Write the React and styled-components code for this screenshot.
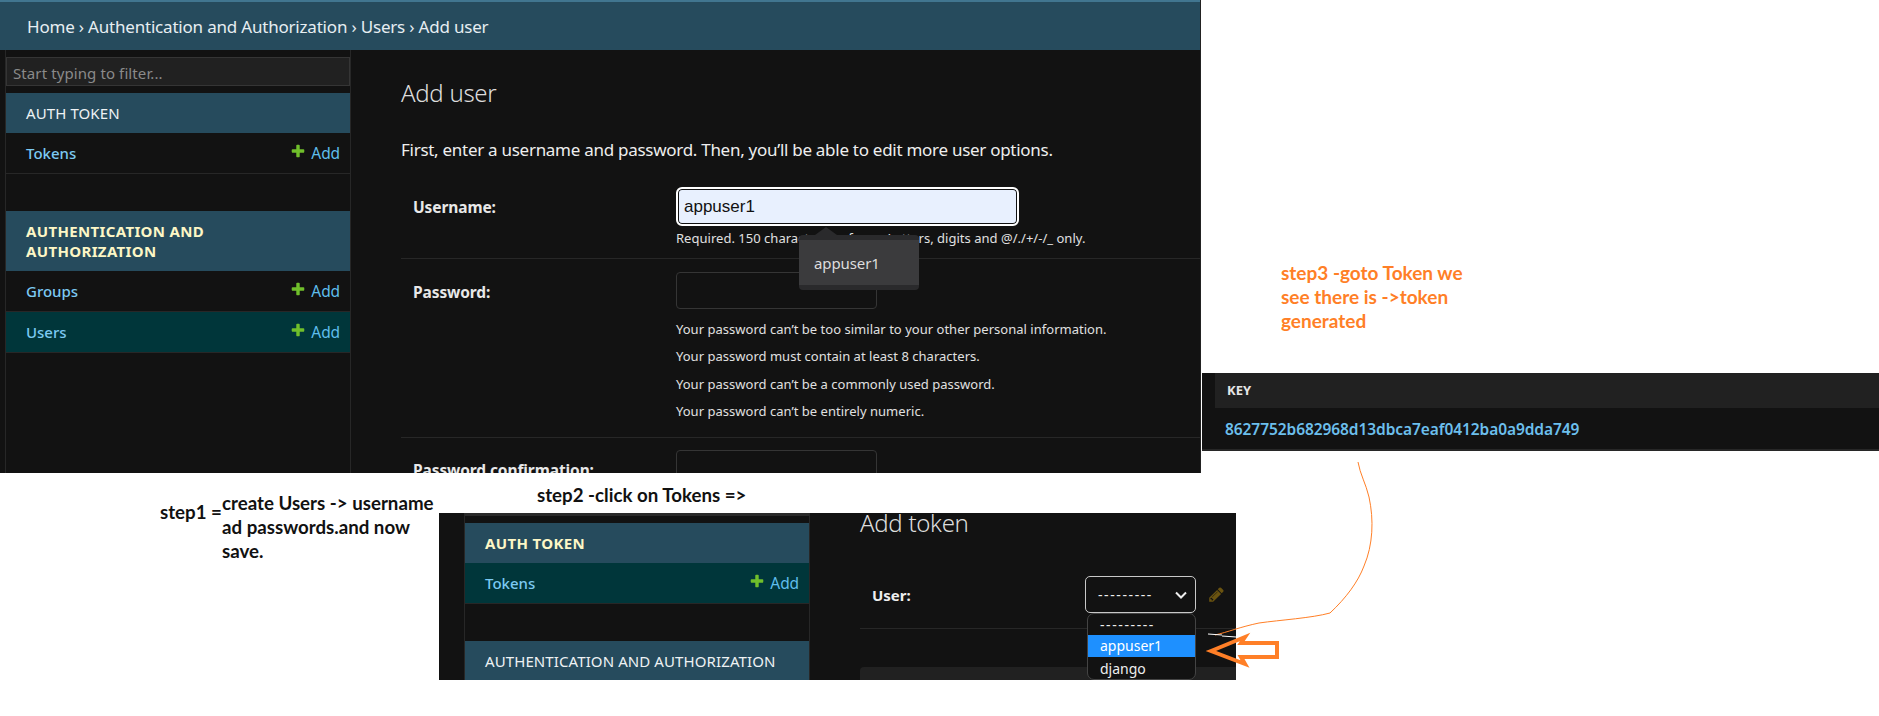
import React from "react";
import styled, { createGlobalStyle } from "styled-components";

const Global = createGlobalStyle`
  html, body { margin: 0; padding: 0; background: #fff; }
  #root { width: 1879px; height: 716px; }
`;

const uiFont = `"Noto Sans", "Open Sans", sans-serif`;
const noteFont = `Lato, "Open Sans", sans-serif`;

const Canvas = styled.div`
  position: relative;
  width: 1879px;
  height: 716px;
  overflow: hidden;
  background: #fff;
  font-family: ${uiFont};
`;

/* ---------- pasted screenshot 1 ---------- */
const UserShot = styled.section`
  position: absolute;
  left: 0;
  top: 0;
  width: 1201px;
  height: 473px;
  box-sizing: border-box;
  border-right: 1px solid #222;
  background: #121212;
  color: #eee;
  overflow: hidden;
  display: flex;
  flex-direction: column;
`;
const Breadcrumbs = styled.header`
  flex: none;
  height: 50px;
  box-sizing: border-box;
  border-top: 2px solid #417690;
  background: #264b5d;
  color: #e6eef2;
  padding-left: 27px;
  font-size: 17px;
  letter-spacing: -0.2px;
  line-height: 50px;
`;
const ShotBody = styled.div`
  flex: 1;
  display: flex;
  min-height: 0;
`;
const Sidebar = styled.nav`
  flex: none;
  width: 346px;
  margin-left: 5px;
  box-sizing: border-box;
  border-left: 1px solid #272727;
  border-right: 1px solid #272727;
  padding-top: 7px;
`;
const Filter = styled.input`
  display: block;
  width: 100%;
  height: 29px;
  box-sizing: border-box;
  margin: 0 0 7px;
  padding: 2px 6px 0;
  border: 1px solid #353535;
  background: #212121;
  color: #eee;
  font: 15px/25px ${uiFont};
  letter-spacing: 0.1px;
  outline: none;
  &::placeholder { color: #8a8a8a; opacity: 1; }
`;
const Caption = styled.div`
  background: #264b5d;
  color: ${(p) => (p.$current ? "#fdf7c6" : "#eef2f4")};
  font-size: 15px;
  font-weight: ${(p) => (p.$current ? 700 : 400)};
  line-height: 20px;
  padding: 10px 20px;
  letter-spacing: ${(p) => (p.$current ? "0.35px" : "0.1px")};
  white-space: nowrap;
`;
const ModelRow = styled.div`
  display: flex;
  align-items: center;
  justify-content: space-between;
  height: 41px;
  box-sizing: border-box;
  padding: 0 10px 0 20px;
  border-bottom: 1px solid #272727;
  background: ${(p) => (p.$selected ? "#00363a" : "transparent")};
`;
const ModelName = styled.span`
  color: #7cc9f2;
  font-size: 15px;
  font-weight: 500;
  letter-spacing: 0;
`;
const AddLink = styled.span`
  display: flex;
  align-items: center;
  gap: 5px;
  color: #5fbdec;
  font-size: 15.5px;
  letter-spacing: -0.1px;
`;
const PlusIcon = styled.svg`
  width: 16px;
  height: 16px;
  margin-top: -4px;
  fill: #70bf2b;
`;
const Plus = () => (
  <PlusIcon viewBox="0 0 1792 1792">
    <path d="M1600 796v192q0 40-28 68t-68 28h-416v416q0 40-28 68t-68 28h-192q-40 0-68-28t-28-68v-416h-416q-40 0-68-28t-28-68v-192q0-40 28-68t68-28h416v-416q0-40 28-68t68-28h192q40 0 68 28t28 68v416h416q40 0 68 28t28 68z" />
  </PlusIcon>
);
const SidebarGap = styled.div`
  height: 37px;
`;
const Main = styled.main`
  flex: 1;
  min-width: 0;
  padding: 26px 0 0 50px;
`;
const Title = styled.h1`
  margin: 0;
  font-size: 24px;
  font-weight: 300;
  line-height: 34px;
  color: #ddd;
  letter-spacing: -0.3px;
`;
const Intro = styled.p`
  margin: 28px 0 14px;
  font-size: 17px;
  line-height: 24px;
  color: #eee;
  letter-spacing: -0.28px;
`;
const FormRow = styled.div`
  display: grid;
  grid-template-columns: 275px 1fr;
  padding: ${(p) => p.$pad};
  border-bottom: 1px solid #272727;
`;
const FieldLabel = styled.label`
  padding-left: 12px;
  font-size: 15.5px;
  font-weight: 700;
  line-height: 40px;
  color: #e8e8e8;
  letter-spacing: -0.1px;
`;
const FocusInput = styled.input`
  display: block;
  width: 343px;
  height: 39px;
  box-sizing: border-box;
  border: 2px solid #fff;
  box-shadow: inset 0 0 0 1px #111;
  outline: none;
  border-radius: 6px;
  background: #e8f0fe;
  color: #111;
  padding: 0 6px;
  font: 17px "Liberation Sans", Arial, sans-serif;
`;
const EmptyInput = styled.input`
  display: block;
  width: 201px;
  height: 37px;
  box-sizing: border-box;
  border: 1px solid #353535;
  border-radius: 4px;
  background: #121212;
`;
const Help = styled.div`
  margin-top: ${(p) => p.$top || "0"};
  font-size: 13px;
  line-height: 18px;
  color: #e0e0e0;
  letter-spacing: 0.02px;
`;
const HelpList = styled.div`
  margin-top: 11px;
  display: flex;
  flex-direction: column;
  gap: 9.4px;
`;
const Autocomplete = styled.div`
  position: absolute;
  left: 799px;
  top: 235px;
  width: 120px;
  height: 55px;
  box-sizing: border-box;
  padding: 5px 0;
  border-radius: 4px;
  background: #2a2a2c;
  &::before {
    content: "";
    position: absolute;
    left: 16px;
    top: -8px;
    border-left: 11px solid transparent;
    border-right: 11px solid transparent;
    border-bottom: 8px solid #2a2a2c;
  }
`;
const AutocompleteItem = styled.div`
  height: 45px;
  padding-left: 15px;
  background: #3b3b3d;
  color: #ddd;
  font-size: 15px;
  line-height: 46px;
  letter-spacing: -0.1px;
`;

/* ---------- pasted screenshot 2: token key ---------- */
const KeyShot = styled.section`
  position: absolute;
  left: 1202px;
  top: 373px;
  width: 677px;
  height: 78px;
  box-sizing: border-box;
  padding-left: 13px;
  background: #121212;
  border-bottom: 2px solid #272727;
`;
const KeyHead = styled.div`
  height: 35px;
  background: #212121;
  color: #e6e6e6;
  font-size: 13px;
  font-weight: 700;
  line-height: 35px;
  padding-left: 12px;
`;
const KeyValue = styled.div`
  height: 41px;
  padding-left: 10px;
  color: #6cbfec;
  font-size: 15.5px;
  font-weight: 600;
  line-height: 43px;
  letter-spacing: -0.08px;
`;

/* ---------- pasted screenshot 3: add token ---------- */
const TokenShot = styled.section`
  position: absolute;
  left: 439px;
  top: 513px;
  width: 797px;
  height: 167px;
  display: flex;
  padding-left: 25px;
  box-sizing: border-box;
  background: #121212;
  color: #eee;
  overflow: hidden;
`;
const TokenSidebar = styled.nav`
  flex: none;
  width: 346px;
  box-sizing: border-box;
  border-left: 1px solid #272727;
  border-right: 1px solid #272727;
  border-top: 3px solid #2a2a2a;
  padding-top: 7px;
`;
const TokenMain = styled.div`
  flex: 1;
  min-width: 0;
  padding-left: 50px;
  margin-top: -7px;
`;
const TokenRow = styled.div`
  display: grid;
  grid-template-columns: 225px auto 1fr;
  align-items: center;
  margin-top: 36px;
  padding-bottom: 15px;
  border-bottom: 1px solid #272727;
`;
const UserLabel = styled.label`
  padding-left: 12px;
  font-size: 15px;
  font-weight: 700;
  color: #eee;
`;
const SelectBox = styled.div`
  width: 111px;
  height: 37px;
  box-sizing: border-box;
  border: 1px solid #c8c8c8;
  border-radius: 5px;
  padding: 0 7px 0 12px;
  display: flex;
  align-items: center;
  justify-content: space-between;
  font-size: 14px;
  color: #eee;
`;
const Dashes = styled.span`
  letter-spacing: 1.6px;
`;
const Pencil = styled.svg`
  width: 17px;
  height: 17px;
  margin-left: 12px;
  fill: #6a5310;
`;
const DarkBox = styled.div`
  height: 30px;
  margin-top: 38px;
  background: #212121;
  border-radius: 4px 0 0 0;
`;
const Dropdown = styled.div`
  position: absolute;
  left: 648px;
  top: 100px;
  width: 109px;
  height: 67px;
  box-sizing: border-box;
  border: 1px solid #444;
  border-radius: 7px;
  background: #121212;
  color: #eee;
  font-size: 14px;
  overflow: hidden;
`;
const Option = styled.div`
  height: ${(p) => p.$h};
  line-height: ${(p) => p.$h};
  padding-left: 12px;
  background: ${(p) => (p.$active ? "#1e90ff" : "transparent")};
  color: ${(p) => (p.$active ? "#fff" : "#eee")};
`;

/* ---------- handwritten notes on the canvas ---------- */
const Note = styled.div`
  position: absolute;
  left: ${(p) => p.$x}px;
  top: ${(p) => p.$y}px;
  color: ${(p) => p.$color || "#111"};
  font-family: ${noteFont};
  font-size: ${(p) => p.$size || 18.7}px;
  font-weight: 700;
  line-height: 24px;
  white-space: pre;
`;
const Overlay = styled.svg`
  position: absolute;
  left: 0;
  top: 0;
  width: 1879px;
  height: 716px;
  pointer-events: none;
`;

export default function App() {
  return (
    <Canvas>
      <Global />
      <UserShot>
        <Breadcrumbs>Home › Authentication and Authorization › Users › Add user</Breadcrumbs>
        <ShotBody>
          <Sidebar>
            <Filter placeholder="Start typing to filter..." readOnly />
            <Caption>AUTH TOKEN</Caption>
            <ModelRow>
              <ModelName>Tokens</ModelName>
              <AddLink><Plus />Add</AddLink>
            </ModelRow>
            <SidebarGap />
            <Caption $current>AUTHENTICATION AND<br />AUTHORIZATION</Caption>
            <ModelRow>
              <ModelName>Groups</ModelName>
              <AddLink><Plus />Add</AddLink>
            </ModelRow>
            <ModelRow $selected>
              <ModelName>Users</ModelName>
              <AddLink><Plus />Add</AddLink>
            </ModelRow>
          </Sidebar>
          <Main>
            <Title>Add user</Title>
            <Intro>First, enter a username and password. Then, you’ll be able to edit more user options.</Intro>
            <FormRow $pad="11px 0 11px">
              <FieldLabel>Username:</FieldLabel>
              <div>
                <FocusInput value="appuser1" readOnly />
                <Help $top="3px">Required. 150 characters or fewer. Letters, digits and @/./+/-/_ only.</Help>
              </div>
            </FormRow>
            <FormRow $pad="13px 0 17px">
              <FieldLabel>Password:</FieldLabel>
              <div>
                <EmptyInput readOnly />
                <HelpList>
                  <Help>Your password can’t be too similar to your other personal information.</Help>
                  <Help>Your password must contain at least 8 characters.</Help>
                  <Help>Your password can’t be a commonly used password.</Help>
                  <Help>Your password can’t be entirely numeric.</Help>
                </HelpList>
              </div>
            </FormRow>
            <FormRow $pad="12px 0 0">
              <FieldLabel>Password confirmation:</FieldLabel>
              <EmptyInput readOnly />
            </FormRow>
          </Main>
        </ShotBody>
        <Autocomplete>
          <AutocompleteItem>appuser1</AutocompleteItem>
        </Autocomplete>
      </UserShot>

      <KeyShot>
        <KeyHead>KEY</KeyHead>
        <KeyValue>8627752b682968d13dbca7eaf0412ba0a9dda749</KeyValue>
      </KeyShot>

      <TokenShot>
        <TokenSidebar>
          <Caption $current>AUTH TOKEN</Caption>
          <ModelRow $selected>
            <ModelName>Tokens</ModelName>
            <AddLink><Plus />Add</AddLink>
          </ModelRow>
          <SidebarGap />
          <Caption>AUTHENTICATION AND AUTHORIZATION</Caption>
        </TokenSidebar>
        <TokenMain>
          <Title>Add token</Title>
          <TokenRow>
            <UserLabel>User:</UserLabel>
            <SelectBox>
              <Dashes>---------</Dashes>
              <svg width="14" height="14" viewBox="0 0 14 14" fill="none" stroke="#eee" strokeWidth="2">
                <path d="M2 4.5l5 5 5-5" />
              </svg>
            </SelectBox>
            <Pencil viewBox="0 0 1792 1792">
              <path d="M491 1536l91-91-235-235-91 91v107h128v128h107zm523-928q0-22-22-22-10 0-17 7l-542 542q-7 7-7 17 0 22 22 22 10 0 17-7l542-542q7-7 7-17zm-54-192l416 416-832 832h-416v-416zm683 96q0 53-37 90l-166 166-416-416 166-165q36-38 90-38 53 0 91 38l235 234q37 39 37 91z" />
            </Pencil>
          </TokenRow>
          <DarkBox />
        </TokenMain>
        <Dropdown>
          <Option $h="21px"><Dashes>---------</Dashes></Option>
          <Option $h="22px" $active>appuser1</Option>
          <Option $h="23px">django</Option>
        </Dropdown>
      </TokenShot>

      <Note $x={160} $y={500}>step1 =</Note>
      <Note $x={222} $y={491}>{"create Users -> username\nad passwords.and now\nsave."}</Note>
      <Note $x={537} $y={483}>{"step2 -click on Tokens =>"}</Note>
      <Note $x={1281} $y={261} $color="#ff7f27" $size={19}>{"step3 -goto Token we\nsee there is ->token\ngenerated"}</Note>

      <Overlay viewBox="0 0 1879 716">
        <path
          d="M1358 462 C1360 474 1366 484 1369 497 C1374 520 1373 545 1364 566 C1358 582 1346 598 1330 613 C1312 618 1280 620 1259 623 C1240 627 1228 632 1215 635"
          fill="none"
          stroke="#ff7f27"
          strokeWidth="1"
        />
        <path d="M1208 634l14 1M1222 636l14 1" stroke="#fff" strokeWidth="1" fill="none" />
        <path
          d="M1211 651L1245 637L1241 643L1277 643L1277 657L1241 657L1245 664Z"
          fill="none"
          stroke="#ff7f27"
          strokeWidth="4"
        />
      </Overlay>
    </Canvas>
  );
}
